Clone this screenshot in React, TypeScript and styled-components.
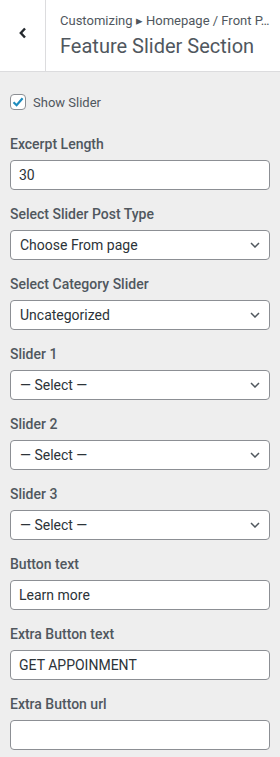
import React, { useState } from 'react';
import styled, { createGlobalStyle } from 'styled-components';

const GlobalStyle = createGlobalStyle`
  html, body {
    margin: 0;
    padding: 0;
    background: #eeeeee;
    font-family: Roboto, "Liberation Sans", Arial, sans-serif;
  }
  * {
    box-sizing: border-box;
  }
`;

const Panel = styled.div`
  width: 280px;
  min-height: 757px;
  background: #eeeeee;
`;

const Header = styled.div`
  display: flex;
  height: 72px;
  background: #ffffff;
  border-bottom: 1px solid #dcdcde;
`;

const BackButton = styled.button`
  flex: 0 0 46px;
  display: flex;
  align-items: center;
  justify-content: center;
  padding: 0 0 6px 0;
  border: none;
  border-right: 1px solid #dcdcde;
  background: transparent;
  color: #23282d;
  cursor: pointer;
`;

const HeaderText = styled.div`
  flex: 1;
  min-width: 0;
  padding: 10px 4px 0 14px;
  display: flex;
  flex-direction: column;
`;

const Crumb = styled.span`
  font-size: 13px;
  line-height: 22px;
  color: #50575e;
  white-space: nowrap;
`;

const Title = styled.h3`
  margin: 0;
  font-size: 20px;
  font-weight: 400;
  line-height: 28px;
  color: #50575e;
`;

const Body = styled.div`
  padding: 20px 10px 0 10px;
`;

const CheckRow = styled.label`
  display: flex;
  align-items: center;
  gap: 7px;
  height: 20px;
  margin-bottom: 20px;
  font-size: 13px;
  color: #50575e;
  cursor: pointer;
`;

const Box = styled.span<{ $checked: boolean }>`
  width: 16px;
  height: 16px;
  border: 1px solid #8c8f94;
  border-radius: 4px;
  background: #ffffff;
  display: flex;
  align-items: center;
  justify-content: center;
  color: #1e8cbe;
`;

const Control = styled.div`
  margin-bottom: 12px;
`;

const ControlTitle = styled.span`
  display: block;
  font-size: 14px;
  font-weight: 500;
  line-height: 24px;
  margin-bottom: 4px;
  color: #50575e;
`;

const TextInput = styled.input`
  display: block;
  width: 100%;
  height: 30px;
  margin: 0;
  padding: 0 8px;
  border: 1px solid #8c8f94;
  border-radius: 4px;
  background: #ffffff;
  font-family: inherit;
  font-size: 14px;
  color: #2c3338;
  outline: none;
`;

const SelectWrap = styled.div`
  position: relative;
  height: 30px;
`;

const Select = styled.select`
  display: block;
  width: 100%;
  height: 30px;
  margin: 0;
  padding: 0 24px 0 9px;
  border: 1px solid #8c8f94;
  border-radius: 4px;
  background: #ffffff;
  font-family: inherit;
  font-size: 14px;
  color: #2c3338;
  appearance: none;
  outline: none;
`;

const Chevron = styled.svg`
  position: absolute;
  right: 10px;
  top: 12px;
  pointer-events: none;
`;

type Field = { kind: 'text' | 'select'; label: string; value: string };

const fields: Field[] = [
  { kind: 'text', label: 'Excerpt Length', value: '30' },
  { kind: 'select', label: 'Select Slider Post Type', value: 'Choose From page' },
  { kind: 'select', label: 'Select Category Slider', value: 'Uncategorized' },
  { kind: 'select', label: 'Slider 1', value: '— Select —' },
  { kind: 'select', label: 'Slider 2', value: '— Select —' },
  { kind: 'select', label: 'Slider 3', value: '— Select —' },
  { kind: 'text', label: 'Button text', value: 'Learn more' },
  { kind: 'text', label: 'Extra Button text', value: 'GET APPOINMENT' },
  { kind: 'text', label: 'Extra Button url', value: '' },
];

const App = () => {
  const [showSlider, setShowSlider] = useState(true);

  return (
    <Panel>
      <GlobalStyle />
      <Header>
        <BackButton aria-label="Back">
          <svg width="10" height="12" viewBox="0 0 10 12">
            <path d="M7 1.5 L2.8 6 L7 10.5" fill="none" stroke="currentColor" strokeWidth="2.4" />
          </svg>
        </BackButton>
        <HeaderText>
          <Crumb>Customizing ▸ Homepage / Front P…</Crumb>
          <Title>Feature Slider Section</Title>
        </HeaderText>
      </Header>

      <Body>
        <CheckRow onClick={() => setShowSlider(!showSlider)}>
          <Box $checked={showSlider}>
            {showSlider && (
              <svg width="14" height="14" viewBox="0 0 14 14">
                <path d="M2.5 7.2 L5.6 10.2 L11.6 3.2" fill="none" stroke="currentColor" strokeWidth="2.2" />
              </svg>
            )}
          </Box>
          Show Slider
        </CheckRow>

        {fields.map(f => (
          <Control key={f.label}>
            <ControlTitle>{f.label}</ControlTitle>
            {f.kind === 'text' ? (
              <TextInput defaultValue={f.value} />
            ) : (
              <SelectWrap>
                <Select defaultValue={f.value}>
                  <option>{f.value}</option>
                </Select>
                <Chevron width="10" height="6" viewBox="0 0 10 6">
                  <path d="M1 1 L5 5 L9 1" fill="none" stroke="#50575e" strokeWidth="1.5" />
                </Chevron>
              </SelectWrap>
            )}
          </Control>
        ))}
      </Body>
    </Panel>
  );
};

export default App;
